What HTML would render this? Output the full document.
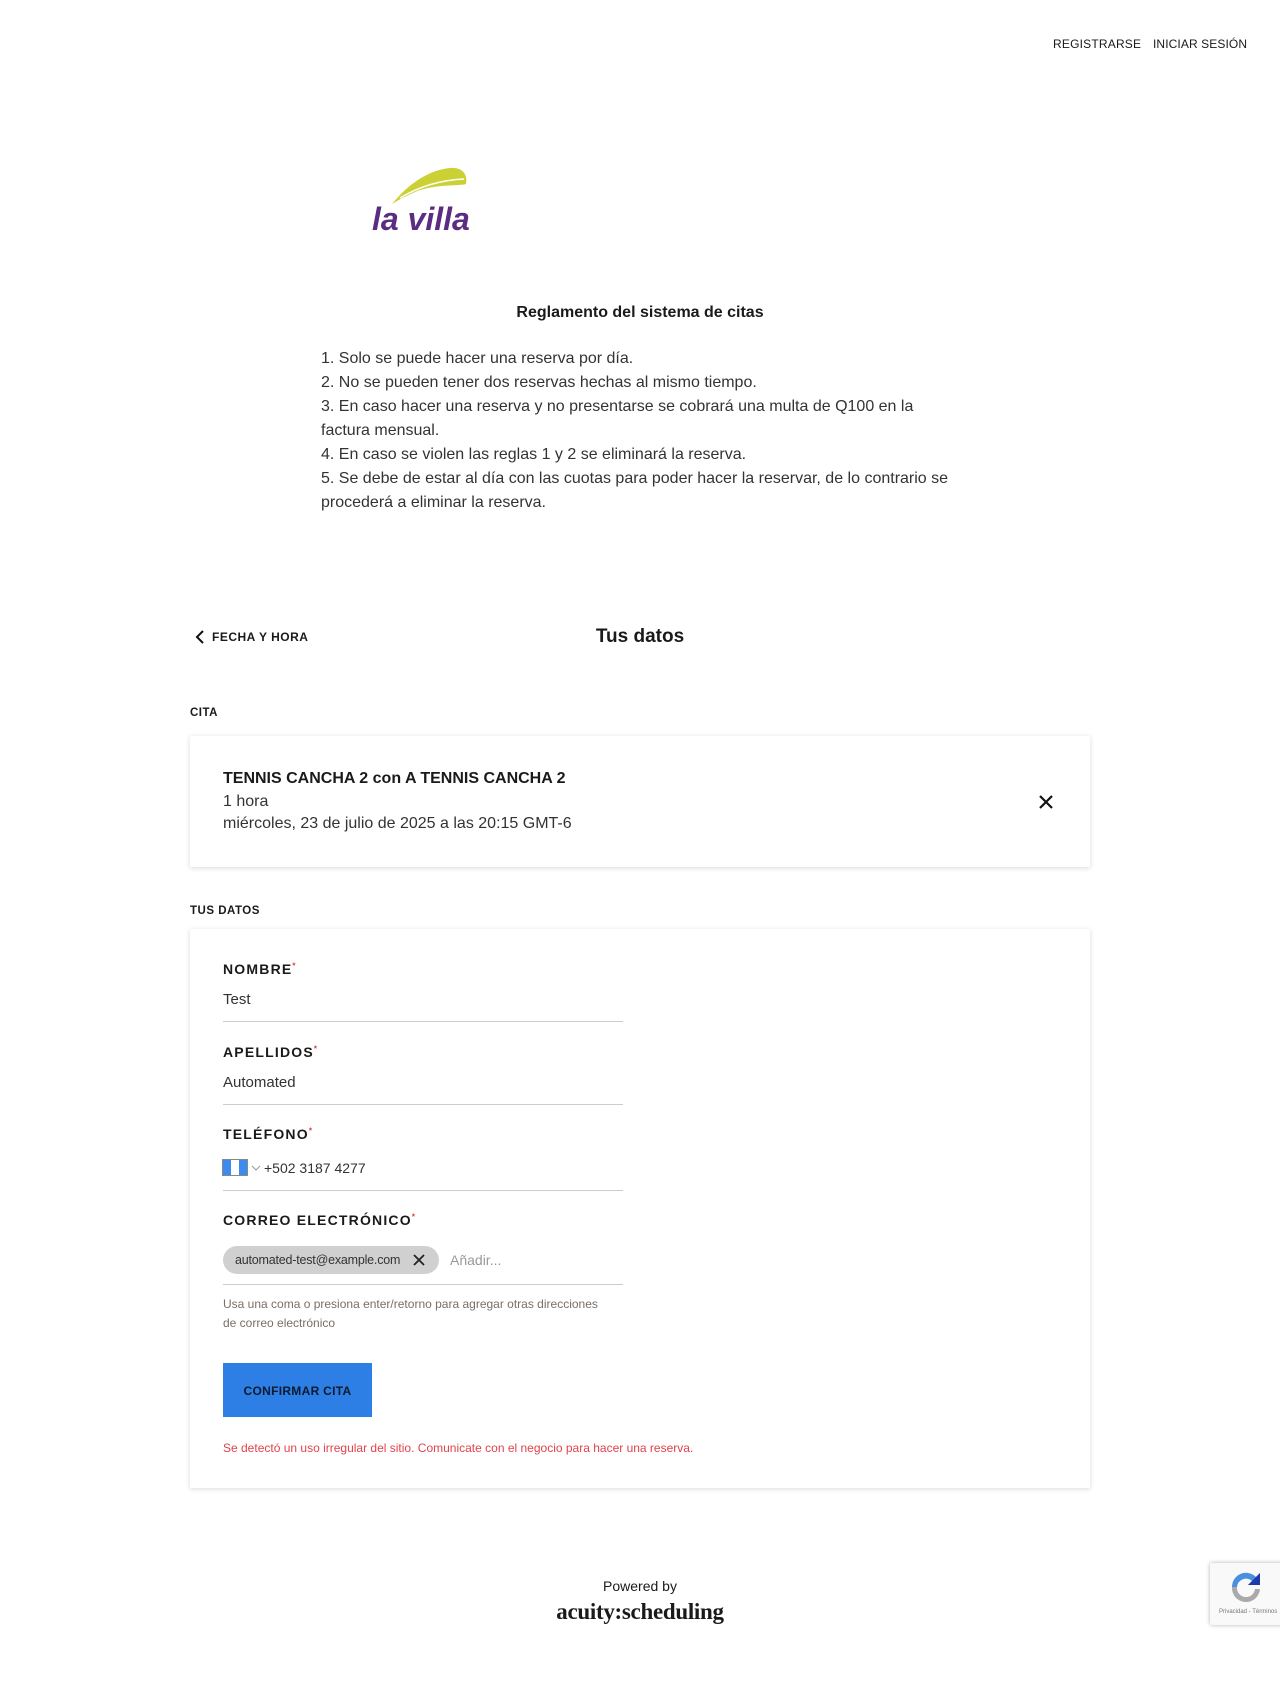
<!DOCTYPE html>
<html><head><meta charset="utf-8"><style>
*{margin:0;padding:0;box-sizing:border-box}
body{width:1280px;height:1683px;background:#fff;font-family:"Liberation Sans",sans-serif;color:#1a1a1a;position:relative;overflow:hidden}
.a{position:absolute;white-space:nowrap}
.lbl{font-size:14px;font-weight:bold;letter-spacing:1.2px}
.lbl sup{color:#d33;font-size:8px}
.val{font-size:15px;color:#333}
.line{position:absolute;left:223px;width:400px;height:1px;background:#ccc}
.card{position:absolute;left:190px;width:900px;background:#fff;box-shadow:0 1px 5px rgba(0,0,0,.15)}
</style></head><body>
<div class="a" style="left:1053px;top:37px;font-size:12px;letter-spacing:.2px">REGISTRARSE</div>
<div class="a" style="left:1153px;top:37px;font-size:12px;letter-spacing:.1px">INICIAR SESIÓN</div>

<svg class="a" style="left:370px;top:164px" width="104" height="72" viewBox="0 0 104 72">
<path d="M22 40 C40 18 60 6 80 4 C92 3 98 10 96 20 C90 22 70 20 50 26 C40 30 30 35 22 40Z" fill="#cbd135"/>
<path d="M30 34 C50 22 72 16 94 15" stroke="#fff" stroke-width="1.5" fill="none"/>
<path d="M26 40 C48 28 72 24 95 24" stroke="#fff" stroke-width="1.5" fill="none"/>
<text x="2" y="66" font-family="Liberation Sans,sans-serif" font-style="italic" font-weight="bold" font-size="32" fill="#5a2d82">la villa</text>
</svg>

<div class="a" style="left:0;width:1280px;text-align:center;top:304px;font-size:16px;font-weight:bold">Reglamento del sistema de citas</div>
<div class="a" style="left:321px;top:347px;font-size:16px;line-height:24px;color:#333;white-space:normal;width:628px">
1. Solo se puede hacer una reserva por día.<br>2. No se pueden tener dos reservas hechas al mismo tiempo.<br>3. En caso hacer una reserva y no presentarse se cobrará una multa de Q100 en la factura mensual.<br>4. En caso se violen las reglas 1 y 2 se eliminará la reserva.<br>5. Se debe de estar al día con las cuotas para poder hacer la reservar, de lo contrario se procederá a eliminar la reserva.</div>

<svg class="a" style="left:194px;top:629px" width="12" height="16"><path d="M9 2 L3 8 L9 14" stroke="#111" stroke-width="2" fill="none"/></svg>
<div class="a" style="left:212px;top:630px;font-size:12px;font-weight:bold;letter-spacing:.5px">FECHA Y HORA</div>
<div class="a" style="left:0;width:1280px;text-align:center;top:626px;font-size:19px;font-weight:bold">Tus datos</div>

<div class="a" style="left:190px;top:707px;font-size:11.5px;font-weight:bold;letter-spacing:.5px">CITA</div>
<div class="card" style="top:736px;height:131px"></div>
<div class="a" style="left:223px;top:770px;font-size:16px;font-weight:bold">TENNIS CANCHA 2 con A TENNIS CANCHA 2</div>
<div class="a" style="left:223px;top:793px;font-size:16px;color:#333">1 hora</div>
<div class="a" style="left:223px;top:815px;font-size:16px;color:#333">miércoles, 23 de julio de 2025 a las 20:15 GMT-6</div>
<svg class="a" style="left:1038px;top:794px" width="16" height="16"><path d="M2 2L14 14M14 2L2 14" stroke="#111" stroke-width="2.2"/></svg>

<div class="a" style="left:190px;top:905px;font-size:11.5px;font-weight:bold;letter-spacing:.5px">TUS DATOS</div>
<div class="card" style="top:929px;height:559px"></div>

<div class="a lbl" style="left:223px;top:961px">NOMBRE<sup>*</sup></div>
<div class="a val" style="left:223px;top:991px">Test</div>
<div class="line" style="top:1021px"></div>
<div class="a lbl" style="left:223px;top:1044px">APELLIDOS<sup>*</sup></div>
<div class="a val" style="left:223px;top:1074px">Automated</div>
<div class="line" style="top:1104px"></div>
<div class="a lbl" style="left:223px;top:1126px">TELÉFONO<sup>*</sup></div>
<div class="a" style="left:222px;top:1159px;width:26px;height:17px;background:#3b8ced;border:1px solid #888"><div style="position:absolute;left:8px;top:0;width:8px;height:15px;background:#fff"></div></div>
<svg class="a" style="left:251px;top:1164px" width="10" height="8"><path d="M1 2L5 6L9 2" stroke="#999" fill="none"/></svg>
<div class="a val" style="left:264px;top:1160px;font-size:14px">+502 3187 4277</div>
<div class="line" style="top:1190px"></div>
<div class="a lbl" style="left:223px;top:1212px">CORREO ELECTRÓNICO<sup>*</sup></div>
<div class="a" style="left:223px;top:1246px;width:216px;height:28px;border-radius:14px;background:#d0d0d0"></div>
<div class="a" style="left:235px;top:1253px;font-size:12.5px;color:#333;letter-spacing:-.2px">automated-test@example.com</div>
<svg class="a" style="left:413px;top:1254px" width="12" height="12"><path d="M1 1L11 11M11 1L1 11" stroke="#222" stroke-width="1.8"/></svg>
<div class="a" style="left:450px;top:1252px;font-size:14px;color:#999">Añadir...</div>
<div class="line" style="top:1284px"></div>
<div class="a" style="left:223px;top:1295px;font-size:12px;line-height:19px;color:#7a6e66">Usa una coma o presiona enter/retorno para agregar otras direcciones<br>de correo electrónico</div>
<div class="a" style="left:223px;top:1363px;width:149px;height:54px;background:#2d7fe6;color:#0d1a2e;font-size:12px;font-weight:bold;text-align:center;line-height:56px;letter-spacing:.3px">CONFIRMAR CITA</div>
<div class="a" style="left:223px;top:1441px;font-size:12px;color:#e0434a">Se detectó un uso irregular del sitio. Comunicate con el negocio para hacer una reserva.</div>

<div class="a" style="left:0;width:1280px;text-align:center;top:1578px;font-size:14px">Powered by</div>
<div class="a" style="left:0;width:1280px;text-align:center;top:1599px;font-size:23px;font-family:'Liberation Serif',serif;font-weight:bold;letter-spacing:-.3px">acuity:scheduling</div>

<div class="a" style="left:1210px;top:1563px;width:74px;height:62px;background:#f9f9f9;box-shadow:0 0 4px rgba(0,0,0,.3);border-radius:2px"></div>
<svg class="a" style="left:1228px;top:1569px" width="36" height="36" viewBox="0 0 36 36">
<path d="M4 18 A14 14 0 0 1 28 8 L32 4 L32 16 L20 16 L24 12 A9 9 0 0 0 9 18Z" fill="#4a90e2"/>
<path d="M28 8 L32 4 L32 16 L20 16Z" fill="#1c3aa9"/>
<path d="M4 18 L9 18 A9 9 0 0 0 27 20 L32 20 A14 14 0 0 1 4 18Z" fill="#aaa"/>
</svg>
<div class="a" style="left:1219px;top:1609px;font-size:6px;color:#777">Privacidad - Términos</div>
</body></html>
